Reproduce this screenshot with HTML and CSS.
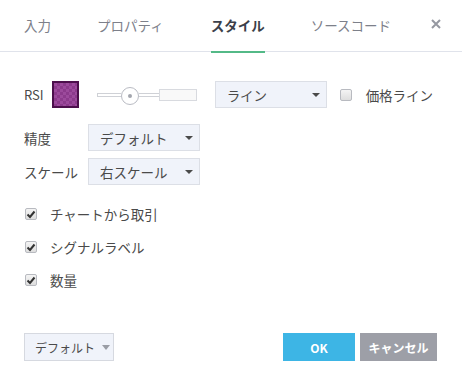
FILE: index.html
```html
<!DOCTYPE html>
<html lang="ja">
<head>
  <meta charset="UTF-8">
  <title>スタイル</title>
  <link rel="stylesheet" href="styles.css">
</head>
<body>
  <div class="dialog">
    <div class="tabs">
      <span class="tab">入力</span>
      <span class="tab">プロパティ</span>
      <span class="tab active">スタイル</span>
      <span class="tab">ソースコード</span>
      <span class="close">
        <svg width="10" height="10" viewBox="0 0 10 10"><path d="M1 1L9 9M9 1L1 9" stroke="#9598a1" stroke-width="2"/></svg>
      </span>
    </div>

    <div class="content">
      <div class="row first">
        <span class="label rsi">RSI</span>
        <span class="swatch"><span class="swatch-fill"></span></span>
        <div class="slider">
          <span class="track-left"></span>
          <span class="knob"><span class="dot"></span></span>
          <span class="track-mid"></span>
          <span class="track-box"></span>
        </div>
        <div class="select line-select">ライン<span class="caret"></span></div>
        <span class="check"></span>
        <span class="label">価格ライン</span>
      </div>

      <div class="row second">
        <span class="label fixed">精度</span>
        <div class="select">デフォルト<span class="caret"></span></div>
      </div>
      <div class="row third">
        <span class="label fixed">スケール</span>
        <div class="select">右スケール<span class="caret"></span></div>
      </div>

      <div class="checks">
        <div class="check-row"><span class="check on"><svg width="10" height="9" viewBox="0 0 10 9"><path d="M1.5 4.5L4 7L8.5 1.5" fill="none" stroke="#333" stroke-width="2"/></svg></span>チャートから取引</div>
        <div class="check-row"><span class="check on"><svg width="10" height="9" viewBox="0 0 10 9"><path d="M1.5 4.5L4 7L8.5 1.5" fill="none" stroke="#333" stroke-width="2"/></svg></span>シグナルラベル</div>
        <div class="check-row"><span class="check on"><svg width="10" height="9" viewBox="0 0 10 9"><path d="M1.5 4.5L4 7L8.5 1.5" fill="none" stroke="#333" stroke-width="2"/></svg></span>数量</div>
      </div>
    </div>

    <div class="footer">
      <div class="preset">デフォルト<span class="caret light"></span></div>
      <div class="spacer"></div>
      <button class="btn ok">OK</button>
      <button class="btn cancel">キャンセル</button>
    </div>
  </div>
</body>
</html>
```

FILE: styles.css
```css
body {
  margin: 0;
  background: #fff;
  font-family: "Noto Sans CJK JP", "Noto Sans", sans-serif;
  font-size: 13.5px;
  color: #4a4a4a;
}
.dialog {
  width: 462px;
  height: 389px;
}
.tabs {
  display: flex;
  align-items: center;
  height: 51px;
  padding: 0 0 0 24px;
  border-bottom: 1px solid #e0e3eb;
  white-space: nowrap;
}
.tab {
  position: relative;
  flex-shrink: 0;
  line-height: 51px;
  color: #7d808a;
  font-size: 13.5px;
}
.tab:nth-child(1) { margin-right: 46px; }
.tab:nth-child(2) { margin-right: 47px; }
.tab.active {
  color: #3b3f4a;
  font-weight: bold;
  margin-right: 46px;
}
.tab.active::after {
  content: "";
  position: absolute;
  left: 0;
  right: 0;
  bottom: -2px;
  height: 2px;
  background: #53b987;
}
.close {
  display: flex;
  margin-left: auto;
  margin-right: 21px;
  margin-top: -4px;
}
.content {
  padding: 29px 24px 0;
}
.row {
  display: flex;
  align-items: center;
}
.label {
  line-height: 20px;
  white-space: nowrap;
}
.rsi {
  font-size: 13px;
  margin-right: 8px;
}
.swatch {
  width: 23px;
  height: 23px;
  border: 2px solid #4c0f4c;
  background: #9b4a9b;
}
.swatch-fill {
  display: block;
  width: 23px;
  height: 23px;
  background-color: #9c4a9c;
  background-image:
    linear-gradient(45deg, #8c3a8c 25%, transparent 25%, transparent 75%, #8c3a8c 75%),
    linear-gradient(45deg, #8c3a8c 25%, transparent 25%, transparent 75%, #8c3a8c 75%);
  background-size: 6px 6px;
  background-position: 0 0, 3px 3px;
}
.slider {
  display: flex;
  align-items: center;
  margin-left: 18px;
  margin-right: 18px;
}
.track-left, .track-mid {
  height: 2px;
  border: 1px solid #cfd1d6;
  background: #fff;
}
.track-left {
  width: 23px;
  border-right: none;
}
.track-mid {
  width: 20px;
  border-left: none;
  border-right: none;
}
.knob {
  display: flex;
  align-items: center;
  justify-content: center;
  width: 16px;
  height: 16px;
  margin-top: 3px;
  border: 1px solid #b9bbc3;
  border-radius: 50%;
  background: #fff;
}
.dot {
  width: 4px;
  height: 4px;
  border-radius: 50%;
  background: #a3a6ae;
}
.track-box {
  width: 36px;
  height: 10px;
  border: 1px solid #d8dadf;
  background: #f9f9f9;
}
.select {
  display: flex;
  align-items: center;
  box-sizing: border-box;
  width: 112px;
  height: 27px;
  padding: 0 0 0 11px;
  border: 1px solid #dcdfe6;
  background: #f0f3fa;
  color: #4a4a4a;
  white-space: nowrap;
}
.line-select {
  margin-right: 13px;
}
.caret {
  margin-left: auto;
  margin-right: 6px;
  border-left: 4px solid transparent;
  border-right: 4px solid transparent;
  border-top: 4px solid #4a4a4a;
}
.caret.light {
  margin-left: 7px;
  margin-right: 0;
  border-left-width: 4px;
  border-right-width: 4px;
  border-top: 5px solid #9a9da5;
}
.check {
  display: flex;
  align-items: center;
  justify-content: center;
  box-sizing: border-box;
  width: 12px;
  height: 12px;
  margin-right: 14px;
  border: 1px solid #b8bac0;
  border-radius: 2px;
  background: linear-gradient(#f4f4f4, #dedede);
}
.check-row .check {
  margin-right: 13px;
}
.second {
  margin-top: 16px;
}
.third {
  margin-top: 7px;
}
.fixed {
  width: 64px;
}
.checks {
  margin-top: 18px;
  padding-left: 1px;
}
.check-row {
  display: flex;
  align-items: center;
  height: 22px;
  margin-bottom: 11px;
  white-space: nowrap;
}
.footer {
  display: flex;
  align-items: center;
  padding: 31px 25px 0 24px;
}
.preset {
  display: flex;
  align-items: center;
  box-sizing: border-box;
  width: 90px;
  height: 28px;
  padding: 0 0 0 10px;
  border: 1px solid #d6d9e0;
  background: #f0f3fa;
  font-size: 12px;
  color: #4a4a4a;
  white-space: nowrap;
}
.spacer {
  flex: 1;
}
.btn {
  height: 28px;
  border: none;
  padding: 0;
  color: #fff;
  font-family: "Noto Sans CJK JP", "Noto Sans", sans-serif;
  font-size: 12px;
  font-weight: bold;
  cursor: pointer;
}
.ok {
  width: 72px;
  background: #3db5e5;
  margin-right: 5px;
}
.cancel {
  width: 77px;
  background: #9d9fa7;
}
```
